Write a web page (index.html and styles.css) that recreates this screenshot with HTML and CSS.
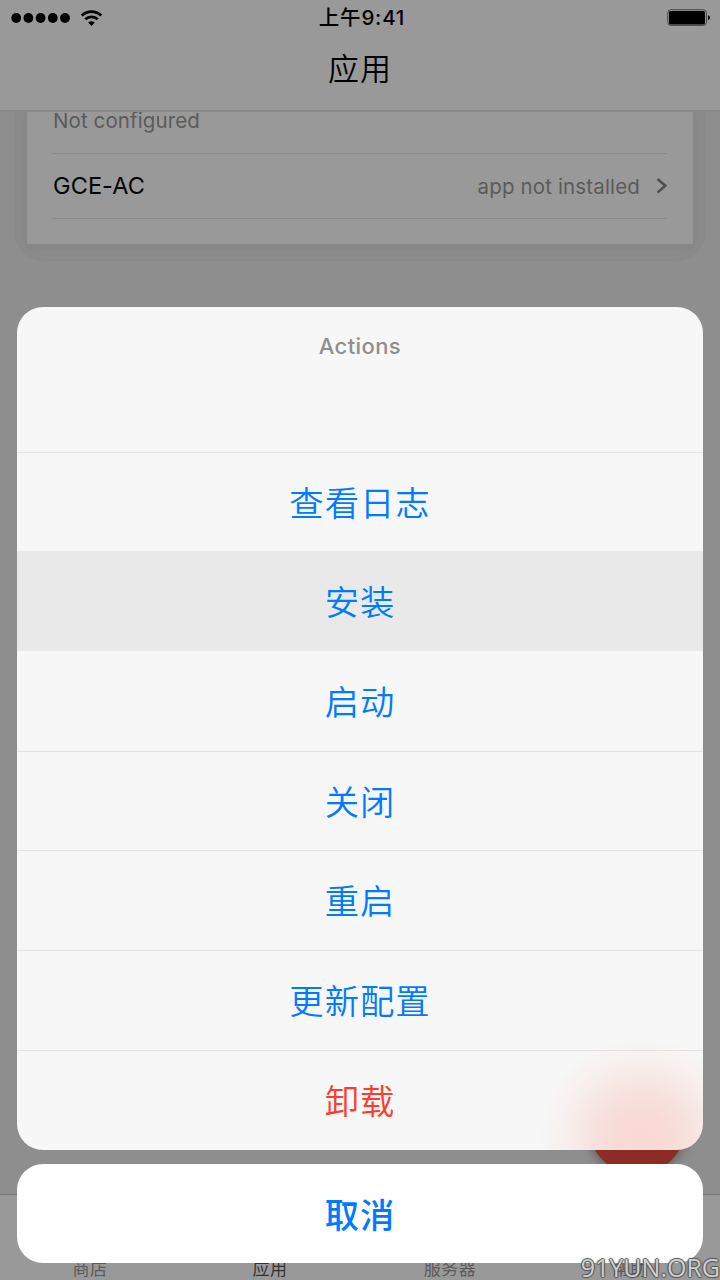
FILE: index.html
```html
<!DOCTYPE html>
<html lang="zh-CN">
<head>
    <meta charset="UTF-8">
    <meta name="viewport" content="width=device-width, initial-scale=1.0">
    <title>应用</title>
    <link rel="stylesheet" href="styles.css">
</head>
<body>

    <div class="screen">
        <header>
            <div class="status-bar">
                <div class="signal">
                    <svg class="dots" width="60" height="12" viewBox="0 0 60 12">
                        <circle cx="5.2" cy="6" r="4.9"/>
                        <circle cx="17.4" cy="6" r="4.9"/>
                        <circle cx="29.6" cy="6" r="4.9"/>
                        <circle cx="41.8" cy="6" r="4.9"/>
                        <circle cx="54" cy="6" r="4.9"/>
                    </svg>
                    <svg class="wifi" width="22" height="17" viewBox="0 0 22 17">
                        <path d="M.8 5.600C6.300 .4 14.700 .4 20.200 5.600" fill="none" stroke="#000" stroke-width="2.800"/>
                        <path d="M4.300 9.300C7.700 6.100 13.300 6.100 16.700 9.300" fill="none" stroke="#000" stroke-width="2.700"/>
                        <path d="M7.200 12.600C9 10.900 12 10.900 13.800 12.600L10.500 16Z"/>
                    </svg>
                </div>
                <span class="time">上午9:41</span>
                <svg class="battery" width="44" height="18" viewBox="0 0 44 18">
                    <rect x=".8" y=".8" width="38.600" height="15.600" rx="3" fill="none" stroke="#444" stroke-width="1"/>
                    <rect x="2" y="2" width="36" height="13.400" rx="1.500"/>
                    <path d="M41 6.200C43.500 7 43.500 10.400 41 11.200Z"/>
                </svg>
            </div>
            <h1>应用</h1>
        </header>

        <main>
            <div class="card-shadow">
                <div class="card">
                    <p class="note">Not configured</p>
                    <div class="app-row">
                        <span class="app-name">GCE-AC</span>
                        <span class="app-state">app not installed</span>
                        <svg class="chevron" width="12" height="18" viewBox="0 0 12 18">
                            <path d="M2.500 2L10.300 8.800L2.500 15.600" fill="none" stroke="#505050" stroke-width="2.500"/>
                        </svg>
                    </div>
                </div>
            </div>
            <div class="fab"></div>
        </main>

        <nav class="tab-bar">
            <span>商店</span>
            <span class="active">应用</span>
            <span>服务器</span>
            <span>帮助</span>
        </nav>

        <div class="overlay">
            <div class="sheet">
                <div class="sheet-title">Actions</div>
                <div class="action">查看日志</div>
                <div class="action pressed">安装</div>
                <div class="action">启动</div>
                <div class="action">关闭</div>
                <div class="action">重启</div>
                <div class="action">更新配置</div>
                <div class="action danger">卸载</div>
            </div>
            <div class="cancel">取消</div>
        </div>

        <div class="watermark">91YUN.ORG</div>
    </div>

</body>
</html>
```
FILE: styles.css
```css
/* Global Styles */
* {
    box-sizing: border-box;
}

body {
    margin: 0;
    font-family: Inter, 'Noto Sans CJK SC', sans-serif;
    color: #000;
}

svg {
    display: block;
}

.screen {
    position: relative;
    display: flex;
    flex-direction: column;
    width: 720px;
    height: 1280px;
    overflow: hidden;
    background-color: #8e8e8e;
}

/* Header Styles */
header {
    height: 112px;
    background-color: #999;
    border-bottom: 2px solid #898989;
}

.status-bar {
    display: grid;
    grid-template-columns: 1fr auto 1fr;
    align-items: center;
    height: 36px;
    padding: 0 9px 0 11px;
}

.signal {
    display: flex;
    align-items: center;
    gap: 10px;
}

.time {
    padding-left: 2px;
    font-size: 20.5px;
    font-weight: 500;
    letter-spacing: 0.8px;
    line-height: 36px;
}

.battery {
    justify-self: end;
}

header h1 {
    margin: 0;
    font-size: 31px;
    font-weight: 350;
    letter-spacing: 1px;
    line-height: 66px;
    text-align: center;
}

/* App list */
main {
    position: relative;
    flex: 1;
    overflow: hidden;
}

.card-shadow {
    width: 692px;
    margin: 0 auto;
    padding: 0 13px 17px;
    border-radius: 0 0 30px 30px;
    background-color: #8a8a8a;
}

.card {
    height: 132px;
    padding: 0 26px 0 25px;
    background-color: #999;
    box-shadow: 0 2px 8px rgba(0, 0, 0, 0.04);
}

.note {
    height: 42px;
    margin: 0;
    padding-left: 1px;
    border-bottom: 1px solid #8b8b8b;
    color: #5b5b5b;
    font-size: 20.5px;
    letter-spacing: 0.1px;
    line-height: 17px;
}

.app-row {
    display: flex;
    align-items: center;
    height: 65px;
    padding-left: 1px;
    border-bottom: 1px solid #8b8b8b;
}

.app-name {
    flex: 1;
    font-size: 23.5px;
    letter-spacing: 0.1px;
    line-height: 63px;
    padding-bottom: 2px;
}

.app-state {
    margin-right: 15px;
    color: #5b5b5b;
    font-size: 20.5px;
    letter-spacing: 0.15px;
}

/* Round button half hidden by the sheet */
.fab {
    position: absolute;
    left: 588px;
    top: 964px;
    width: 98px;
    height: 98px;
    border-radius: 50%;
    background-color: #8b2d24;
    box-shadow: 0 2px 12px rgba(0, 0, 0, 0.4);
}

/* Tab bar */
.tab-bar {
    display: grid;
    grid-template-columns: repeat(4, 1fr);
    align-items: end;
    height: 86px;
    border-top: 1px solid #777;
    background-color: #999;
    color: #5b5b5b;
    font-size: 17px;
    line-height: 22px;
    letter-spacing: 0.5px;
    text-align: center;
}

.tab-bar .active {
    color: #333;
}

/* Action sheet */
.overlay {
    position: absolute;
    inset: 0;
    display: flex;
    flex-direction: column;
    justify-content: flex-end;
    gap: 14px;
    padding: 0 17.5px 17.5px 17.4px;
}

.sheet {
    border-radius: 26px;
    overflow: hidden;
    background: radial-gradient(circle at 625px 832px, #f8d9d5 0, #f8dad6 25px, #f6e2dd 48px, #f8eeeb 75px, #f7f7f7 102px);
}

.sheet-title {
    height: 144.4px;
    padding-top: 23px;
    color: #8f8f8f;
    font-size: 22px;
    font-weight: 500;
    letter-spacing: 0.4px;
    line-height: 32px;
    text-align: center;
}

.action, .cancel {
    color: #007aff;
    font-size: 34.3px;
    letter-spacing: 1px;
    text-align: center;
}

.action {
    height: 99.7px;
    border-top: 1px solid rgba(0, 0, 0, 0.08);
    font-weight: 350;
    line-height: 101px;
}

.action.pressed {
    background-color: #e9e9e9;
}

.action.pressed, .action.pressed + .action {
    border-top-color: transparent;
}

.action.danger {
    color: #ff3b30;
}

.cancel {
    height: 99px;
    border-radius: 26px;
    background-color: #fff;
    font-weight: 500;
    line-height: 103px;
}

.watermark {
    position: absolute;
    right: 0;
    bottom: 0;
    color: #cfcfcf;
    font-family: 'Open Sans', sans-serif;
    font-size: 25px;
    line-height: 26px;
    text-shadow: -1px 0 1px #555, 1px 0 1px #555, 0 -1px 1px #555, 0 1px 1px #555;
}
```
